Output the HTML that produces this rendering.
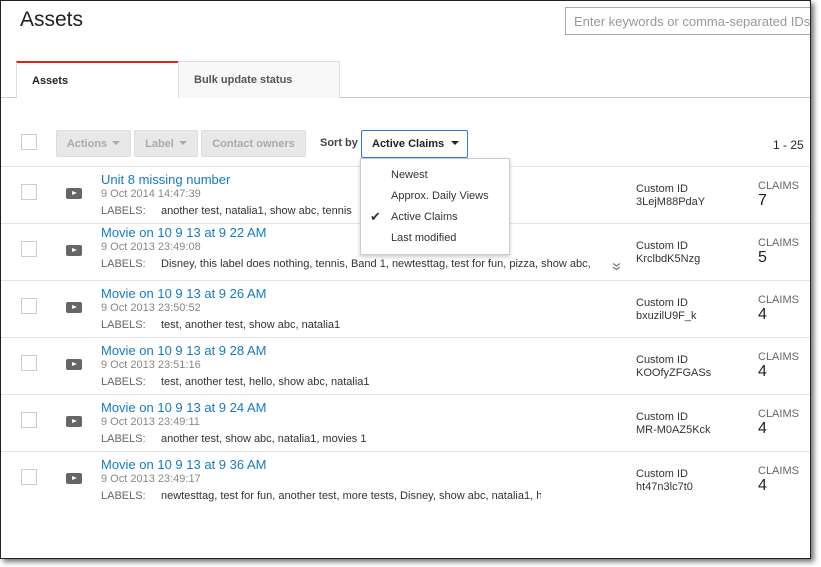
<!DOCTYPE html>
<html><head><style>
*{margin:0;padding:0;box-sizing:border-box}
body{width:821px;height:567px;background:#fff;font-family:"Liberation Sans",Arial,sans-serif;position:relative;overflow:hidden}
#win{position:absolute;left:0;top:0;width:811px;height:559px;border:1px solid #222;background:#fff;overflow:hidden;box-shadow:3px 3px 5px rgba(0,0,0,.55)}
.a{position:absolute;white-space:nowrap}
h1{position:absolute;left:19px;top:7px;font-size:21px;font-weight:normal;color:#222}
.search{position:absolute;left:564px;top:6px;width:260px;height:28px;border:1px solid #aaa;font-size:13px;color:#999;padding:6px 8px;white-space:nowrap}
.tab1{position:absolute;left:15px;top:60px;width:162px;height:37px;border-top:2px solid #e62117;border-left:1px solid #ddd;background:#fff;font-size:11px;font-weight:bold;color:#222;padding:12px 15px}
.tab2{position:absolute;left:177px;top:60px;width:162px;height:37px;border:1px solid #ddd;border-bottom:none;background:#f8f8f8;font-size:11px;font-weight:bold;color:#555;padding:12px 15px}
.tabline{position:absolute;left:0;top:96px;width:810px;height:1px;background:#ccc}
.cb{position:absolute;width:16px;height:16px;border:1px solid #ccc;background:#fff}
.btn{position:absolute;top:129px;height:27px;background:#e8e8e8;border:1px solid #ddd;border-radius:2px;font-size:11px;font-weight:bold;color:#aaa;padding:7px 0;text-align:center;white-space:nowrap}
.car{display:inline-block;width:0;height:0;border-left:4px solid transparent;border-right:4px solid transparent;border-top:4px solid currentColor;margin-left:5px;vertical-align:2px}
.sel{position:absolute;left:360px;top:129px;width:107px;height:28px;border:1px solid #2b7bd6;border-radius:2px;font-size:11px;font-weight:bold;color:#222;padding:7px 0 0 10px;background:#fff;white-space:nowrap}
.hr{position:absolute;left:0;width:810px;height:1px;background:#e5e5e5}
.t{font-size:13px;color:#167ac6}
.d{font-size:11px;color:#888}
.l{font-size:11px;color:#666}
.lv{font-size:11px;color:#333}
.play{position:absolute;left:65px;width:16px;height:11px;background:#666;border-radius:2px}
.play:after{content:"";position:absolute;left:6px;top:3px;border-left:5px solid #fff;border-top:2.5px solid transparent;border-bottom:2.5px solid transparent}
.ci{font-size:11px;color:#333;line-height:13px}
.cl{font-size:11px;color:#666}
.cn{font-size:16px;color:#222}
.menu{position:absolute;left:359px;top:157px;width:150px;height:97px;background:#fff;border:1px solid #ccc;box-shadow:0 2px 4px rgba(0,0,0,.2);font-size:11px;color:#333}
.menu div{position:absolute;left:30px;white-space:nowrap}
</style></head><body>
<div id="win">
<h1>Assets</h1>
<div class="search">Enter keywords or comma-separated IDs</div>
<div class="tabline"></div>
<div class="tab1">Assets</div>
<div class="tab2">Bulk update status</div>

<div class="cb" style="left:20px;top:133px"></div>
<div class="btn" style="left:55px;width:75px">Actions<span class="car"></span></div>
<div class="btn" style="left:133px;width:64px">Label<span class="car"></span></div>
<div class="btn" style="left:200px;width:105px">Contact owners</div>
<div class="a" style="left:319px;top:136px;font-size:11px;font-weight:bold;color:#444">Sort by</div>
<div class="sel">Active Claims<span class="car" style="margin-left:7px"></span></div>
<div class="a" style="left:772px;top:137px;font-size:12px;color:#222">1 - 25</div>

<div class="hr" style="top:165px"></div>
<div class="hr" style="top:222px"></div>
<div class="hr" style="top:279px"></div>
<div class="hr" style="top:336px"></div>
<div class="hr" style="top:393px"></div>
<div class="hr" style="top:450px"></div>

<div class="cb" style="left:20px;top:183px"></div><div class="play" style="top:187px"></div>
<div class="a t" style="left:100px;top:171px">Unit 8 missing number</div>
<div class="a d" style="left:100px;top:187px">9 Oct 2014 14:47:39</div>
<div class="a l" style="left:100px;top:204px">LABELS:</div><div class="a lv" style="left:160px;top:204px">another test, natalia1, show abc, tennis</div>
<div class="a ci" style="left:635px;top:182px">Custom ID<br>3LejM88PdaY</div>
<div class="a cl" style="left:757px;top:179px">CLAIMS</div><div class="a cn" style="left:757px;top:191px">7</div>

<div class="cb" style="left:20px;top:240px"></div><div class="play" style="top:244px"></div>
<div class="a t" style="left:100px;top:224px">Movie on 10 9 13 at 9 22 AM</div>
<div class="a d" style="left:100px;top:240px">9 Oct 2013 23:49:08</div>
<div class="a l" style="left:100px;top:257px">LABELS:</div><div class="a lv" style="left:160px;top:257px">Disney, this label does nothing, tennis, Band 1, newtesttag, test for fun, pizza, show abc,</div>
<svg class="a" style="left:611px;top:261px" width="9" height="9" viewBox="0 0 9 9"><path d="M1 1.5L4.5 4L8 1.5M1 5L4.5 7.5L8 5" fill="none" stroke="#777" stroke-width="1.2"/></svg>
<div class="a ci" style="left:635px;top:239px">Custom ID<br>KrclbdK5Nzg</div>
<div class="a cl" style="left:757px;top:236px">CLAIMS</div><div class="a cn" style="left:757px;top:248px">5</div>

<div class="cb" style="left:20px;top:297px"></div><div class="play" style="top:301px"></div>
<div class="a t" style="left:100px;top:285px">Movie on 10 9 13 at 9 26 AM</div>
<div class="a d" style="left:100px;top:301px">9 Oct 2013 23:50:52</div>
<div class="a l" style="left:100px;top:318px">LABELS:</div><div class="a lv" style="left:160px;top:318px">test, another test, show abc, natalia1</div>
<div class="a ci" style="left:635px;top:296px">Custom ID<br>bxuzilU9F_k</div>
<div class="a cl" style="left:757px;top:293px">CLAIMS</div><div class="a cn" style="left:757px;top:305px">4</div>

<div class="cb" style="left:20px;top:354px"></div><div class="play" style="top:358px"></div>
<div class="a t" style="left:100px;top:342px">Movie on 10 9 13 at 9 28 AM</div>
<div class="a d" style="left:100px;top:358px">9 Oct 2013 23:51:16</div>
<div class="a l" style="left:100px;top:375px">LABELS:</div><div class="a lv" style="left:160px;top:375px">test, another test, hello, show abc, natalia1</div>
<div class="a ci" style="left:635px;top:353px">Custom ID<br>KOOfyZFGASs</div>
<div class="a cl" style="left:757px;top:350px">CLAIMS</div><div class="a cn" style="left:757px;top:362px">4</div>

<div class="cb" style="left:20px;top:411px"></div><div class="play" style="top:415px"></div>
<div class="a t" style="left:100px;top:399px">Movie on 10 9 13 at 9 24 AM</div>
<div class="a d" style="left:100px;top:415px">9 Oct 2013 23:49:11</div>
<div class="a l" style="left:100px;top:432px">LABELS:</div><div class="a lv" style="left:160px;top:432px">another test, show abc, natalia1, movies 1</div>
<div class="a ci" style="left:635px;top:410px">Custom ID<br>MR-M0AZ5Kck</div>
<div class="a cl" style="left:757px;top:407px">CLAIMS</div><div class="a cn" style="left:757px;top:419px">4</div>

<div class="cb" style="left:20px;top:468px"></div><div class="play" style="top:472px"></div>
<div class="a t" style="left:100px;top:456px">Movie on 10 9 13 at 9 36 AM</div>
<div class="a d" style="left:100px;top:472px">9 Oct 2013 23:49:17</div>
<div class="a l" style="left:100px;top:489px">LABELS:</div><div class="a lv" style="left:160px;top:489px;width:380px;overflow:hidden">newtesttag, test for fun, another test, more tests, Disney, show abc, natalia1, h</div>
<div class="a ci" style="left:635px;top:467px">Custom ID<br>ht47n3lc7t0</div>
<div class="a cl" style="left:757px;top:464px">CLAIMS</div><div class="a cn" style="left:757px;top:476px">4</div>

<div class="menu">
<div style="top:10px">Newest</div>
<div style="top:31px">Approx. Daily Views</div>
<div style="left:9px;font-size:13px;top:50px">&#10004;</div>
<div style="top:52px">Active Claims</div>
<div style="top:73px">Last modified</div>
</div>
</div>
</body></html>
